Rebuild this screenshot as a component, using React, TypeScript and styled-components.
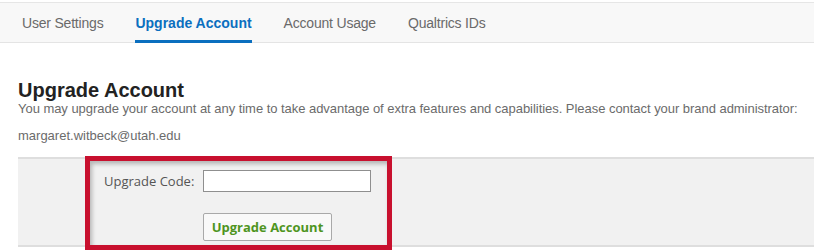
import React from "react";
import styled, { createGlobalStyle } from "styled-components";

const Global = createGlobalStyle`
  html, body { margin: 0; padding: 0; background: #ffffff; }
  body { font-family: "Liberation Sans", Arial, sans-serif; }
  * { box-sizing: border-box; }
`;

const Page = styled.div`
  width: 814px;
  height: 252px;
  overflow: hidden;
  padding-top: 2px;
`;

const TabBar = styled.nav`
  display: flex;
  align-items: stretch;
  gap: 32px;
  height: 41px;
  padding-left: 22px;
  background: #f8f8f8;
  border-top: 1px solid #e6e6e6;
  border-bottom: 1px solid #e4e4e4;
`;

const Tab = styled.div<{ $active?: boolean }>`
  display: flex;
  align-items: center;
  font-size: 14px;
  letter-spacing: ${(p) => (p.$active ? "0" : "-0.2px")};
  color: ${(p) => (p.$active ? "#0b6fbf" : "#6a6a6a")};
  font-weight: ${(p) => (p.$active ? 700 : 400)};
  border-bottom: 3px solid ${(p) => (p.$active ? "#0b6fbf" : "transparent")};
  margin-bottom: -1px;
  padding-top: 3px;
  padding-bottom: 1px;
`;

const Content = styled.section`
  padding: 36px 0 0 18px;
`;

const Title = styled.h1`
  margin: 0;
  font-size: 20px;
  line-height: 22px;
  font-weight: 700;
  color: #222222;
`;

const Desc = styled.p`
  margin: 0;
  font-size: 13px;
  line-height: 16px;
  letter-spacing: -0.04px;
  color: #6b6b6b;
`;

const Email = styled.p`
  margin: 11px 0 0;
  font-size: 13px;
  line-height: 16px;
  color: #6b6b6b;
`;

const Panel = styled.div`
  position: relative;
  margin: 13px 0 0 18px;
  height: 90px;
  background: #f1f1f1;
  border-top: 2px solid #dedede;
  border-bottom: 2px solid #dedede;
  padding: 10px 0 0 86px;
  display: grid;
  grid-template-columns: 99px auto;
  grid-template-rows: 23px auto;
  row-gap: 17px;
  align-items: center;
  font-family: "Open Sans", sans-serif;
`;

const Label = styled.label`
  font-size: 13px;
  color: #555555;
`;

const Input = styled.input`
  width: 168px;
  height: 22px;
  border: 1px solid #8f8f8f;
  background: #ffffff;
  margin: 0;
  padding: 0 4px;
`;

const Button = styled.button`
  grid-column: 2;
  justify-self: start;
  width: 129px;
  height: 28px;
  border: 1px solid #a9a9a9;
  border-radius: 2px;
  background: #f9f9f9;
  font-family: "Open Sans", sans-serif;
  font-weight: 700;
  font-size: 13px;
  color: #4f951f;
  padding: 0;
  cursor: pointer;
`;

const Highlight = styled.div`
  position: absolute;
  left: 67px;
  top: -3px;
  width: 307px;
  height: 94px;
  border: 5px solid #c8102e;
  box-shadow: inset 2px 3px 4px rgba(0, 0, 0, 0.25);
  pointer-events: none;
`;

export default function App() {
  return (
    <Page>
      <Global />
      <TabBar>
        <Tab>User Settings</Tab>
        <Tab $active>Upgrade Account</Tab>
        <Tab>Account Usage</Tab>
        <Tab>Qualtrics IDs</Tab>
      </TabBar>
      <Content>
        <Title>Upgrade Account</Title>
        <Desc>
          You may upgrade your account at any time to take advantage of extra features and
          capabilities. Please contact your brand administrator:
        </Desc>
        <Email>margaret.witbeck@utah.edu</Email>
      </Content>
      <Panel>
        <Label>Upgrade Code:</Label>
        <Input />
        <Button>Upgrade Account</Button>
        <Highlight />
      </Panel>
    </Page>
  );
}
